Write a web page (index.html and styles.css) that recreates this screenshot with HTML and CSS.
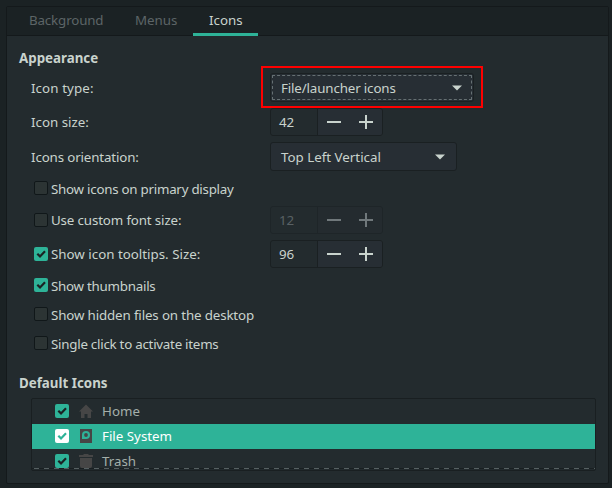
FILE: index.html
```html
<!DOCTYPE html>
<html lang="en">
<head>
<meta charset="utf-8">
<title>Desktop</title>
<link rel="stylesheet" href="styles.css">
</head>
<body>
<svg width="0" height="0" class="defs">
  <symbol id="check" viewBox="0 0 14 14"><path d="M3.3 6.8 6 9.4 11 4.2" fill="none" stroke="currentColor" stroke-width="2.2"/></symbol>
  <symbol id="arrow" viewBox="0 0 10 6"><path d="M0 .5h10L5 5.5z" fill="currentColor"/></symbol>
  <symbol id="minus" viewBox="0 0 14 14"><path d="M0 6h14v2H0z" fill="currentColor"/></symbol>
  <symbol id="plus" viewBox="0 0 14 14"><path d="M0 6h6V0h2v6h6v2H8v6H6V8H0z" fill="currentColor"/></symbol>
</svg>
<main class="notebook">
  <nav class="tabs">
    <div class="tab tab-background"><span class="snug">Background</span></div>
    <div class="tab tab-menus"><span>Menus</span></div>
    <div class="tab tab-icons active"><span>Icons</span></div>
  </nav>
  <section class="page">
    <h2>Appearance</h2>
    <div class="settings">
      <div class="row combo-row"><span class="label loose">Icon type:</span>
        <div class="combo focused"><span class="snug">File/launcher icons</span><svg class="arrow"><use href="#arrow"/></svg></div></div>
      <div class="row spin-row"><span class="label">Icon size:</span>
        <div class="spin"><span class="value">42</span><div class="buttons"><svg><use href="#minus"/></svg><svg><use href="#plus"/></svg></div></div></div>
      <div class="row combo-row"><span class="label snug">Icons orientation:</span>
        <div class="combo"><span>Top Left Vertical</span><svg class="arrow"><use href="#arrow"/></svg></div></div>
      <div class="row check-row"><div class="option"><i class="box"></i><span class="tight">Show icons on primary display</span></div></div>
      <div class="row spin-row"><div class="option"><i class="box"></i><span class="snug">Use custom font size:</span></div>
        <div class="spin disabled"><span class="value">12</span><div class="buttons"><svg><use href="#minus"/></svg><svg><use href="#plus"/></svg></div></div></div>
      <div class="row spin-row"><div class="option"><svg class="box on"><use href="#check"/></svg><span>Show icon tooltips. Size:</span></div>
        <div class="spin"><span class="value">96</span><div class="buttons"><svg><use href="#minus"/></svg><svg><use href="#plus"/></svg></div></div></div>
      <div class="row check-row"><div class="option"><svg class="box on"><use href="#check"/></svg><span class="tight">Show thumbnails</span></div></div>
      <div class="row check-row"><div class="option"><i class="box"></i><span class="snug">Show hidden files on the desktop</span></div></div>
      <div class="row check-row"><div class="option"><i class="box"></i><span class="tight">Single click to activate items</span></div></div>
    </div>
    <h2 class="second">Default Icons</h2>
    <div class="list">
      <div class="item"><svg class="box on"><use href="#check"/></svg>
        <svg class="icon" viewBox="0 0 16 16"><path d="M8 1.5 1 8.5h2V15h3.5v-4h3v4H13V8.5h2z"/></svg><span>Home</span></div>
      <div class="item selected"><svg class="box on"><use href="#check"/></svg>
        <svg class="icon" viewBox="0 0 16 16"><path d="M2 1h12v14H2z"/><path class="disk" d="M4 11V7a4 4 0 1 1 4 4z"/><circle cx="8" cy="7" r="1.9"/></svg><span>File System</span></div>
      <div class="item"><svg class="box on"><use href="#check"/></svg>
        <svg class="icon" viewBox="0 0 16 16"><path d="M1 2h4l1-1h4l1 1h4v2H1zM2 5h12v8q0 2-2 2H4q-2 0-2-2z"/></svg><span>Trash</span></div>
    </div>
  </section>
</main>
</body>
</html>
```

FILE: styles.css
```css
* { box-sizing: border-box; }
body {
  margin: 0;
  width: 612px;
  height: 488px;
  padding: 6px 3px 4px 6px;
  overflow: hidden;
  background: #1b2224;
  color: #c9d3cd;
  font: 13.33px/18px "Noto Sans", sans-serif;
  white-space: nowrap;
}
.defs { position: absolute; }
svg { display: block; flex: none; }
.snug { letter-spacing: -0.14px; }
.tight { letter-spacing: -0.25px; }
.loose { letter-spacing: 0.1px; }
.notebook { height: 478px; border: 1px solid #14191b; border-radius: 2px; background: #232b2e; }
.tabs { display: flex; height: 29px; padding-left: 10px; background: #1b2224; border-bottom: 1px solid #14191b; }
.tab { height: 29px; padding: 4px 12px 0; color: #5d6567; }
.tab-background { width: 106px; }
.tab-menus { width: 70px; }
.tab-icons { width: 65px; padding-left: 16px; }
.tab.active { color: #c9d3cd; border-bottom: 3px solid #2eb398; }
.page { padding: 13px 12px 0; }
h2 { margin: 0; height: 24px; font-size: 13.33px; font-weight: 700; line-height: 18px; }
.settings { display: flex; flex-direction: column; gap: 6px; padding-left: 12px; }
.row { display: grid; grid-template-columns: 239px max-content; align-items: center; }
.combo-row { height: 29px; }
.spin-row { height: 28px; }
.check-row { height: 23px; }
.combo {
  position: relative;
  display: flex;
  align-items: center;
  justify-content: space-between;
  width: 187px;
  height: 29px;
  padding: 0 11px 0 10px;
  border: 1px solid #1a2022;
  border-radius: 3px;
  background: #272e34;
}
.combo.focused { width: 204px; }
.combo.focused::before { content: ""; position: absolute; inset: 1px; border: 1px dashed #667073; border-radius: 1px; }
.combo.focused::after { content: ""; position: absolute; inset: -8px -10px -7px -10px; border: 2px solid #ff0000; }
.arrow { width: 10px; height: 6px; }
.spin { display: flex; width: 113px; height: 28px; border: 1px solid #1a2022; border-radius: 3px; overflow: hidden; }
.value { width: 47px; padding: 4px 0 0 8px; border-right: 1px solid #1a2022; }
.buttons { display: flex; flex: 1; align-items: center; gap: 18px; padding-left: 9px; background: #272e34; }
.buttons svg { width: 14px; height: 14px; }
.disabled { color: #70787b; border-color: #1e2528; }
.disabled .value { color: #596164; border-color: #1e2528; }
.disabled .buttons { background: #242b2f; }
.option { display: flex; align-items: center; gap: 3px; padding-left: 3px; }
.box { display: block; flex: none; width: 14px; height: 14px; border: 1px solid #101719; border-radius: 2px; background: #2c3434; }
.option .box { margin-top: -1px; }
.box.on { border: 0; background: #2eb398; color: #1b2224; }
h2.second { margin-top: 19px; }
.list {
  position: relative;
  height: 73px;
  margin-left: 12px;
  overflow: hidden;
  border: 1px solid #191f21;
  border-radius: 2px;
}
.list::after {
  content: "";
  position: absolute;
  left: 0; right: 0; bottom: 1px;
  height: 1px;
  background: repeating-linear-gradient(90deg, #191f21 0 2px, #566062 2px 7px, #191f21 7px 10px);
}
.item { display: flex; align-items: center; height: 25px; padding: 0 0 1px 23px; color: #a4afaa; }
.item .icon { width: 16px; height: 16px; margin: 0 8px 0 9px; fill: #464646; }
.selected { background: #2eb398; color: #fff; }
.selected .box.on { background: #fff; color: #2eb398; }
.icon .disk { fill: #2eb398; }
```
